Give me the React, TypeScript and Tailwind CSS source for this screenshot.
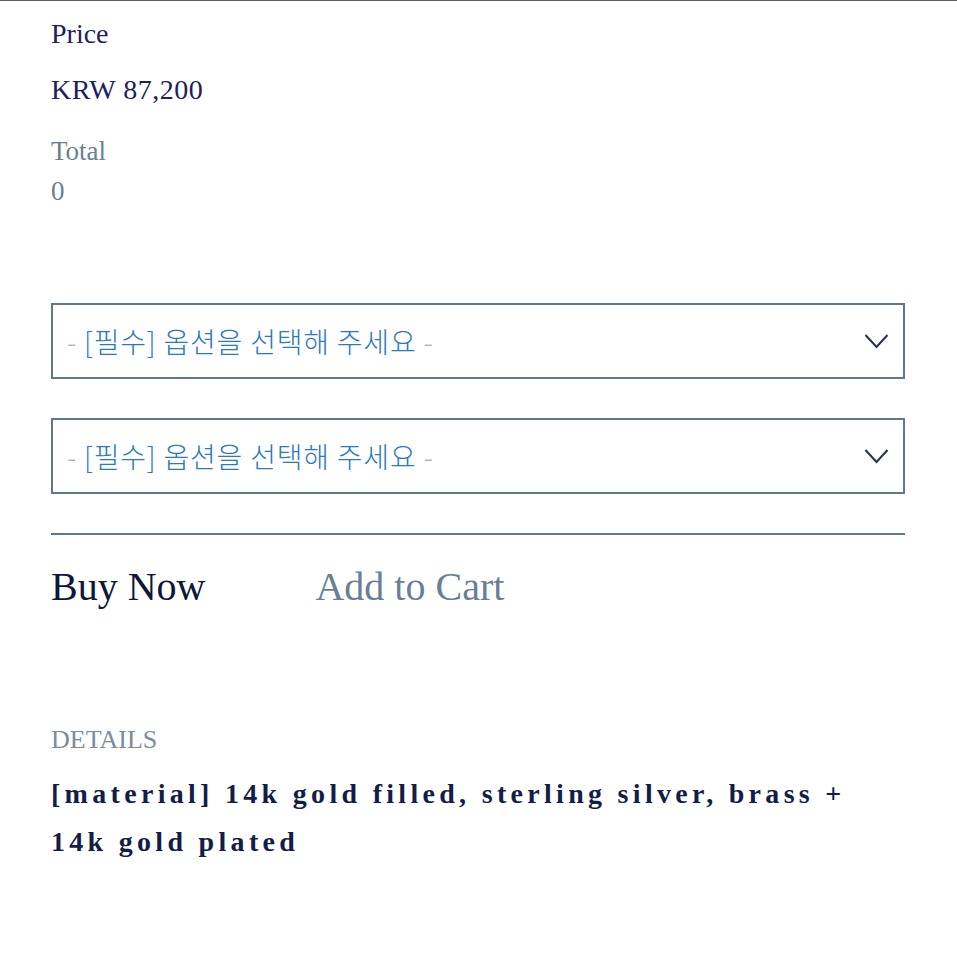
import React from "react";

function Chevron() {
  return (
    <svg width="25" height="16" viewBox="0 0 25 16" fill="none" className="shrink-0">
      <polyline points="1.5,2 12.5,14 23.5,2" stroke="#26324f" strokeWidth="2" fill="none" />
    </svg>
  );
}

function SelectBox() {
  return (
    <div className="box-border h-[76px] border-2 border-[#60788f] flex items-center justify-between pl-[14px] pr-[14px] bg-white">
      <span
        className="text-[28px] leading-none font-light tracking-[0.8px] text-[#2c79c0]"
        style={{ fontFamily: '"Noto Sans CJK KR", "Noto Sans", sans-serif' }}
      >
        <span className="text-[#a5b5c6]">-</span> [필수] 옵션을 선택해 주세요{" "}
        <span className="text-[#a5b5c6]">-</span>
      </span>
      <Chevron />
    </div>
  );
}

export default function App() {
  const serif = { fontFamily: '"Liberation Serif", "Times New Roman", serif' };
  return (
    <div className="min-h-[957px] bg-white border-t border-[#56616b]" style={serif}>
      <div className="pl-[51px] pr-[52px] pt-[19px] pb-[40px]">
        <div className="text-[28px] leading-[28px] text-[#211d5e]">Price</div>
        <div className="mt-[28px] text-[28px] leading-[28px] text-[#211d5e] tracking-[0.5px]">KRW 87,200</div>
        <div className="mt-[34px] text-[27px] leading-[27px] text-[#6a7f91]">Total</div>
        <div className="mt-[13px] text-[27px] leading-[27px] text-[#6a7f91]">0</div>

        <div className="mt-[98px]">
          <SelectBox />
        </div>
        <div className="mt-[39px]">
          <SelectBox />
        </div>

        <div className="mt-[39px] h-[2px] bg-[#60788f]" />

        <div className="mt-[32px] flex items-center gap-[110px]">
          <button className="text-[40px] leading-[40px] text-[#0e1739]" style={serif}>
            Buy Now
          </button>
          <button className="text-[40px] leading-[40px] text-[#687f97]" style={serif}>
            Add to Cart
          </button>
        </div>

        <div className="mt-[120px] text-[26px] leading-[25px] text-[#7b8c9c]">DETAILS</div>
        <div className="mt-[18px] text-[28px] leading-[48px] font-bold text-[#141d46] tracking-[4.3px]">
          [material] 14k gold filled, sterling silver, brass +
          <br />
          14k gold plated
        </div>
      </div>
    </div>
  );
}
